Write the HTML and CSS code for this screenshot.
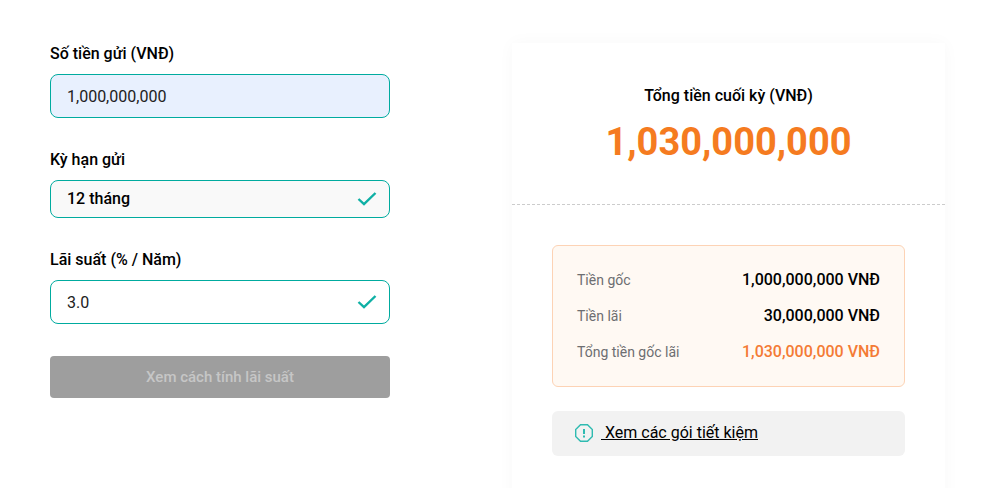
FILE: index.html
```html
<!DOCTYPE html>
<html lang="vi">
<head>
<meta charset="utf-8">
<meta name="viewport" content="width=device-width, initial-scale=1">
<title>Tính lãi tiền gửi</title>
<link rel="stylesheet" href="styles.css">
</head>
<body>
<main class="calculator">
  <form class="form">
    <div class="field">
      <label class="label" for="amount">Số tiền gửi (VNĐ)</label>
      <div class="control">
        <input class="input input-filled" id="amount" type="text" value="1,000,000,000">
      </div>
    </div>
    <div class="field">
      <label class="label" for="term">Kỳ hạn gửi</label>
      <div class="control">
        <select class="input select" id="term">
          <option>12 tháng</option>
        </select>
        <svg class="tick" viewBox="0 0 20 14" aria-hidden="true"><path d="M1.500 7 7 12.200 18.500 1"/></svg>
      </div>
    </div>
    <div class="field">
      <label class="label" for="rate">Lãi suất (% / Năm)</label>
      <div class="control">
        <input class="input" id="rate" type="text" value="3.0">
        <svg class="tick" viewBox="0 0 20 14" aria-hidden="true"><path d="M1.500 7 7 12.200 18.500 1"/></svg>
      </div>
    </div>
    <button class="button" type="button" disabled>Xem cách tính lãi suất</button>
  </form>
  <section class="result">
    <div class="total">
      <p class="total-label">Tổng tiền cuối kỳ (VNĐ)</p>
      <p class="total-value">1,030,000,000</p>
    </div>
    <div class="details">
      <dl class="summary">
        <div class="row"><dt>Tiền gốc</dt><dd>1,000,000,000 VNĐ</dd></div>
        <div class="row"><dt>Tiền lãi</dt><dd>30,000,000 VNĐ</dd></div>
        <div class="row row-total"><dt>Tổng tiền gốc lãi</dt><dd>1,030,000,000 VNĐ</dd></div>
      </dl>
      <div class="notice">
        <svg class="notice-icon" viewBox="0 0 18 18" aria-hidden="true"><path d="M5.500.7h7l4.800 4.800v7l-4.800 4.800h-7L.7 12.500v-7z"/><path class="mark" d="M9 5v5M9 11.500v2"/></svg>
        <a class="link" href="#">&nbsp;Xem các gói tiết kiệm</a>
      </div>
    </div>
  </section>
</main>
</body>
</html>
```
FILE: styles.css
```css
* {
  box-sizing: border-box;
}

body {
  margin: 0;
  background: #fff;
  color: #000;
  font: 16px/24px Roboto, "Liberation Sans", sans-serif;
}

p, dl, dd {
  margin: 0;
}

.calculator {
  display: grid;
  grid-template-columns: 340fr 433fr;
  column-gap: 122px;
  height: 100vh;
  min-height: 456px;
  padding: 42px 46px 0 50px;
  overflow: hidden;
}

.field {
  margin-bottom: 30px;
}

.label {
  display: block;
  margin-bottom: 8px;
  font-weight: 500;
}

.control {
  position: relative;
}

.input {
  display: block;
  width: 100%;
  height: 44px;
  padding: 0 16px;
  border: 1px solid #00ab9f;
  border-radius: 8px;
  background: #fff;
  color: #212121;
  font: inherit;
}

.input-filled {
  background: #e8f0fe;
}

.select {
  height: 38px;
  appearance: none;
  background: #f9f9f9;
  color: #000;
  font-weight: 500;
}

.tick {
  position: absolute;
  top: 50%;
  right: 13px;
  width: 20px;
  height: 14px;
  transform: translateY(-50%);
  fill: none;
  stroke: #0fb0a5;
  stroke-width: 2.4;
}

.button {
  display: block;
  width: 100%;
  height: 42px;
  margin-top: 32px;
  padding: 0;
  border: 0;
  border-radius: 4px;
  background: #9e9e9e;
  color: #c6c6c6;
  font: inherit;
  font-size: 15px;
  font-weight: 500;
}

.result {
  min-height: 480px;
  margin-top: 1px;
  background: #fff;
  box-shadow: 0 0 16px rgba(0, 0, 0, 0.03);
}

.total {
  padding: 41px 16px 38px;
  border-bottom: 1px dashed #ccc;
  text-align: center;
}

.total-label {
  font-weight: 500;
}

.total-value {
  margin-top: 10px;
  color: #f57b20;
  font-size: 38px;
  line-height: 48px;
  font-weight: 700;
}

.details {
  padding: 40px;
}

.summary {
  display: grid;
  gap: 12px;
  padding: 22px 24px;
  border: 1px solid #fdd3b5;
  border-radius: 6px;
  background: #fff9f3;
}

.row {
  display: flex;
  justify-content: space-between;
  font-weight: 500;
}

.row dt {
  color: #6d6e71;
  font-size: 14px;
  font-weight: 400;
}

.row-total dd {
  color: #f47b35;
}

.notice {
  display: flex;
  align-items: center;
  gap: 8px;
  margin-top: 24px;
  padding: 10px 23px 11px;
  border-radius: 6px;
  background: #f2f2f2;
}

.notice-icon {
  width: 18px;
  height: 18px;
  fill: none;
  stroke: #2fbbb1;
  stroke-width: 1.4;
}

.mark {
  stroke-width: 2;
}

.link {
  color: #000;
}
```
